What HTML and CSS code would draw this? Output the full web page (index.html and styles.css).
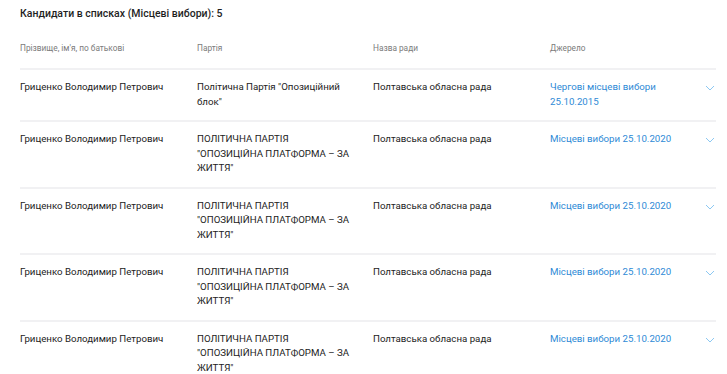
FILE: index.html
```html
<!DOCTYPE html>
<html lang="uk">
<head>
<meta charset="utf-8">
<title>Кандидати в списках</title>
<link rel="stylesheet" href="styles.css">
</head>
<body>
<div class="page">
  <h2 class="title">Кандидати в списках (Місцеві вибори): 5</h2>
  <div class="table">
    <div class="row head">
      <div class="cell">Прізвище, ім'я, по батькові</div>
      <div class="cell">Партія</div>
      <div class="cell">Назва ради</div>
      <div class="cell">Джерело</div>
    </div>
    <div class="row">
      <div class="cell">Гриценко Володимир Петрович</div>
      <div class="cell party">Політична Партія "Опозиційний блок"</div>
      <div class="cell">Полтавська обласна рада</div>
      <div class="cell source"><a class="link">Чергові місцеві вибори 25.10.2015</a><svg class="chev" viewBox="0 0 10 6" width="10" height="6"><path d="M1 1 L5 5 L9 1" fill="none" stroke="#8cc8f2" stroke-width="1"/></svg></div>
    </div>
    <div class="row">
      <div class="cell">Гриценко Володимир Петрович</div>
      <div class="cell party">ПОЛІТИЧНА ПАРТІЯ "ОПОЗИЦІЙНА ПЛАТФОРМА – ЗА ЖИТТЯ"</div>
      <div class="cell">Полтавська обласна рада</div>
      <div class="cell source"><a class="link">Місцеві вибори 25.10.2020</a><svg class="chev" viewBox="0 0 10 6" width="10" height="6"><path d="M1 1 L5 5 L9 1" fill="none" stroke="#8cc8f2" stroke-width="1"/></svg></div>
    </div>
    <div class="row">
      <div class="cell">Гриценко Володимир Петрович</div>
      <div class="cell party">ПОЛІТИЧНА ПАРТІЯ "ОПОЗИЦІЙНА ПЛАТФОРМА – ЗА ЖИТТЯ"</div>
      <div class="cell">Полтавська обласна рада</div>
      <div class="cell source"><a class="link">Місцеві вибори 25.10.2020</a><svg class="chev" viewBox="0 0 10 6" width="10" height="6"><path d="M1 1 L5 5 L9 1" fill="none" stroke="#8cc8f2" stroke-width="1"/></svg></div>
    </div>
    <div class="row">
      <div class="cell">Гриценко Володимир Петрович</div>
      <div class="cell party">ПОЛІТИЧНА ПАРТІЯ "ОПОЗИЦІЙНА ПЛАТФОРМА – ЗА ЖИТТЯ"</div>
      <div class="cell">Полтавська обласна рада</div>
      <div class="cell source"><a class="link">Місцеві вибори 25.10.2020</a><svg class="chev" viewBox="0 0 10 6" width="10" height="6"><path d="M1 1 L5 5 L9 1" fill="none" stroke="#8cc8f2" stroke-width="1"/></svg></div>
    </div>
    <div class="row">
      <div class="cell">Гриценко Володимир Петрович</div>
      <div class="cell party">ПОЛІТИЧНА ПАРТІЯ "ОПОЗИЦІЙНА ПЛАТФОРМА – ЗА ЖИТТЯ"</div>
      <div class="cell">Полтавська обласна рада</div>
      <div class="cell source"><a class="link">Місцеві вибори 25.10.2020</a><svg class="chev" viewBox="0 0 10 6" width="10" height="6"><path d="M1 1 L5 5 L9 1" fill="none" stroke="#8cc8f2" stroke-width="1"/></svg></div>
    </div>
  </div>
</div>
</body>
</html>
```
FILE: styles.css
```css
html, body {
  margin: 0;
  padding: 0;
  background: #ffffff;
}
body {
  font-family: Roboto, "Liberation Sans", Arial, sans-serif;
  color: #222222;
}
.page {
  padding: 6px 11px 0 20px;
}
.title {
  margin: 0;
  font-size: 10.5px;
  font-weight: 500;
  line-height: 15px;
  color: #1f1f1f;
}
.table {
  margin-top: 13px;
}
.row {
  display: grid;
  grid-template-columns: 177px 176px 177px 1fr;
  border-bottom: 2px solid #f1f1f3;
  padding: 10px 0 11px;
  font-size: 9.7px;
  line-height: 14.5px;
}
.row.head {
  font-size: 8.3px;
  color: #7b7b7b;
  padding: 7px 0 13px;
  line-height: 14px;
}
.cell {
  padding-right: 16px;
}
.party {
  padding-right: 19px;
}
.source {
  display: flex;
  align-items: flex-start;
  justify-content: space-between;
  padding-right: 1px;
}
.link {
  color: #2e8ad6;
  max-width: 140px;
  text-decoration: none;
}
.chev {
  margin-top: 5px;
  flex: none;
}
```
